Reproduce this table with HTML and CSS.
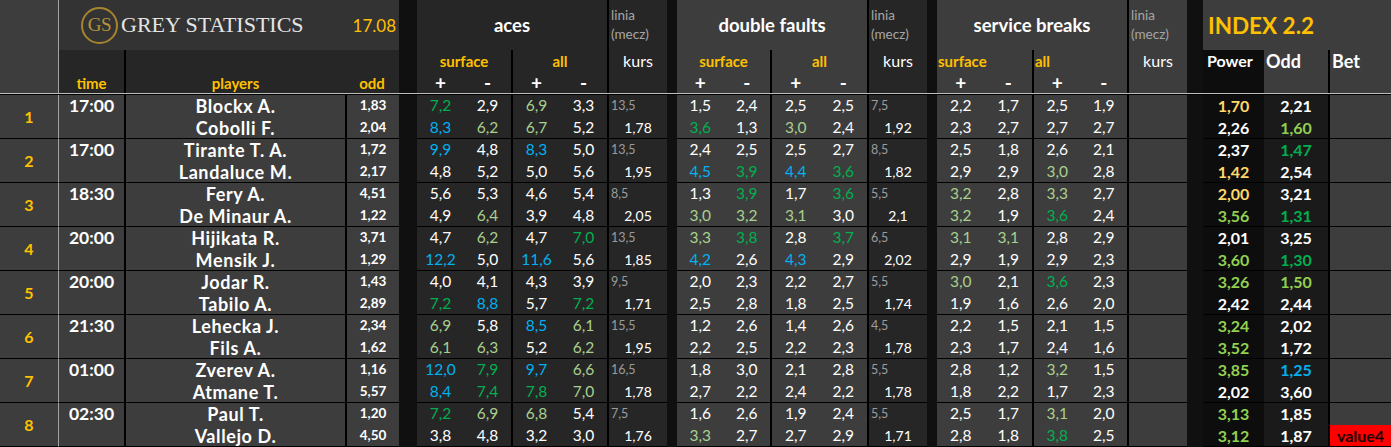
FILE: index.html
```html
<!DOCTYPE html>
<html lang="pl">
<head>
<meta charset="utf-8">
<title>Grey Statistics</title>
<link rel="stylesheet" href="styles.css">
</head>
<body>
<div class="sheet">
  <div class="hdr">
    <div class="m r2"></div>
    <div class="t sep c3 title">
      <span class="seal">GS</span>
      <span class="brand">GREY STATISTICS</span>
      <span class="date">17.08</span>
    </div>
    <div class="gap r2"></div>
    <div class="d c2 gt">aces</div>
    <div class="d bl r2 kh"><div class="lm">linia<br>(mecz)</div><div class="kw">kurs</div></div>
    <div class="gap r2"></div>
    <div class="m c2 gt">double faults</div>
    <div class="d bl r2 kh"><div class="lm">linia<br>(mecz)</div><div class="kw">kurs</div></div>
    <div class="gap r2"></div>
    <div class="m c2 gt">service breaks</div>
    <div class="m bl r2 kh"><div class="lm">linia<br>(mecz)</div><div class="kw">kurs</div></div>
    <div class="gap r2"></div>
    <div class="m c3 it">INDEX 2.2</div>

    <div class="d sep lab">time</div>
    <div class="d bl lab">players</div>
    <div class="d lab">odd</div>
    <div class="d hq"><span class="cap">surface</span><span class="pm">+</span><span class="pm">-</span></div>
    <div class="d bl hq"><span class="cap">all</span><span class="pm">+</span><span class="pm">-</span></div>
    <div class="m hq"><span class="cap">surface</span><span class="pm">+</span><span class="pm">-</span></div>
    <div class="m bl hq"><span class="cap">all</span><span class="pm">+</span><span class="pm">-</span></div>
    <div class="m hq"><span class="cap left">surface</span><span class="pm">+</span><span class="pm">-</span></div>
    <div class="m bl hq"><span class="cap left">all</span><span class="pm">+</span><span class="pm">-</span></div>
    <div class="k ih pwh">Power</div>
    <div class="m ih">Odd</div>
    <div class="m bl ih">Bet</div>
  </div>
  <div class="rule"></div>

  <div class="row">
    <div class="m idx">1</div>
    <div class="m sep tm">17:00</div>
    <div class="m bl two nm"><span>Blockx A.</span><span>Cobolli F.</span></div>
    <div class="m bl two od"><span>1,83</span><span>2,04</span></div>
    <div class="gap"></div>
    <div class="d q"><span class="g">7,2</span><span>2,9</span><span class="b">8,3</span><span class="l">6,2</span></div>
    <div class="d bl q"><span class="l">6,9</span><span>3,3</span><span class="l">6,7</span><span>5,2</span></div>
    <div class="d bl two kv"><span class="sm">13,5</span><span class="v">1,78</span></div>
    <div class="gap"></div>
    <div class="m q"><span>1,5</span><span>2,4</span><span class="g">3,6</span><span>1,3</span></div>
    <div class="m bl q"><span>2,5</span><span>2,5</span><span class="l">3,0</span><span>2,4</span></div>
    <div class="d bl two kv"><span class="sm">7,5</span><span class="v">1,92</span></div>
    <div class="gap"></div>
    <div class="m q"><span>2,2</span><span>1,7</span><span>2,3</span><span>2,7</span></div>
    <div class="m bl q"><span>2,5</span><span>1,9</span><span>2,7</span><span>2,7</span></div>
    <div class="m bl"></div>
    <div class="gap"></div>
    <div class="k two pw"><span class="y">1,70</span><span>2,26</span></div>
    <div class="o two pw"><span>2,21</span><span class="lg">1,60</span></div>
    <div class="m bl"></div>
  </div>

  <div class="row">
    <div class="m idx">2</div>
    <div class="m sep tm">17:00</div>
    <div class="m bl two nm"><span>Tirante T. A.</span><span>Landaluce M.</span></div>
    <div class="m bl two od"><span>1,72</span><span>2,17</span></div>
    <div class="gap"></div>
    <div class="d q"><span class="b">9,9</span><span>4,8</span><span>4,8</span><span>5,2</span></div>
    <div class="d bl q"><span class="b">8,3</span><span>5,0</span><span>5,0</span><span>5,6</span></div>
    <div class="d bl two kv"><span class="sm">13,5</span><span class="v">1,95</span></div>
    <div class="gap"></div>
    <div class="m q"><span>2,4</span><span>2,5</span><span class="b">4,5</span><span class="g">3,9</span></div>
    <div class="m bl q"><span>2,5</span><span>2,7</span><span class="b">4,4</span><span class="g">3,6</span></div>
    <div class="d bl two kv"><span class="sm">8,5</span><span class="v">1,82</span></div>
    <div class="gap"></div>
    <div class="m q"><span>2,5</span><span>1,8</span><span>2,9</span><span>2,9</span></div>
    <div class="m bl q"><span>2,6</span><span>2,1</span><span class="l">3,0</span><span>2,8</span></div>
    <div class="m bl"></div>
    <div class="gap"></div>
    <div class="k two pw"><span>2,37</span><span class="y">1,42</span></div>
    <div class="o two pw"><span class="g">1,47</span><span>2,54</span></div>
    <div class="m bl"></div>
  </div>

  <div class="row">
    <div class="m idx">3</div>
    <div class="m sep tm">18:30</div>
    <div class="m bl two nm"><span>Fery A.</span><span>De Minaur A.</span></div>
    <div class="m bl two od"><span>4,51</span><span>1,22</span></div>
    <div class="gap"></div>
    <div class="d q"><span>5,6</span><span>5,3</span><span>4,9</span><span class="l">6,4</span></div>
    <div class="d bl q"><span>4,6</span><span>5,4</span><span>3,9</span><span>4,8</span></div>
    <div class="d bl two kv"><span class="sm">8,5</span><span class="v">2,05</span></div>
    <div class="gap"></div>
    <div class="m q"><span>1,3</span><span class="g">3,9</span><span class="l">3,0</span><span class="l">3,2</span></div>
    <div class="m bl q"><span>1,7</span><span class="g">3,6</span><span class="l">3,1</span><span>3,0</span></div>
    <div class="d bl two kv"><span class="sm">5,5</span><span class="v">2,1</span></div>
    <div class="gap"></div>
    <div class="m q"><span class="l">3,2</span><span>2,8</span><span class="l">3,2</span><span>1,9</span></div>
    <div class="m bl q"><span class="l">3,3</span><span>2,7</span><span class="g">3,6</span><span>2,4</span></div>
    <div class="m bl"></div>
    <div class="gap"></div>
    <div class="k two pw"><span class="y">2,00</span><span class="lg">3,56</span></div>
    <div class="o two pw"><span>3,21</span><span class="g">1,31</span></div>
    <div class="m bl"></div>
  </div>

  <div class="row">
    <div class="m idx">4</div>
    <div class="m sep tm">20:00</div>
    <div class="m bl two nm"><span>Hijikata R.</span><span>Mensik J.</span></div>
    <div class="m bl two od"><span>3,71</span><span>1,29</span></div>
    <div class="gap"></div>
    <div class="d q"><span>4,7</span><span class="l">6,2</span><span class="b">12,2</span><span>5,0</span></div>
    <div class="d bl q"><span>4,7</span><span class="g">7,0</span><span class="b">11,6</span><span>5,6</span></div>
    <div class="d bl two kv"><span class="sm">13,5</span><span class="v">1,85</span></div>
    <div class="gap"></div>
    <div class="m q"><span class="l">3,3</span><span class="g">3,8</span><span class="b">4,2</span><span>2,6</span></div>
    <div class="m bl q"><span>2,8</span><span class="g">3,7</span><span class="b">4,3</span><span>2,9</span></div>
    <div class="d bl two kv"><span class="sm">6,5</span><span class="v">2,02</span></div>
    <div class="gap"></div>
    <div class="m q"><span class="l">3,1</span><span class="l">3,1</span><span>2,9</span><span>1,9</span></div>
    <div class="m bl q"><span>2,8</span><span>2,9</span><span>2,9</span><span>2,3</span></div>
    <div class="m bl"></div>
    <div class="gap"></div>
    <div class="k two pw"><span>2,01</span><span class="lg">3,60</span></div>
    <div class="o two pw"><span>3,25</span><span class="g">1,30</span></div>
    <div class="m bl"></div>
  </div>

  <div class="row">
    <div class="m idx">5</div>
    <div class="m sep tm">20:00</div>
    <div class="m bl two nm"><span>Jodar R.</span><span>Tabilo A.</span></div>
    <div class="m bl two od"><span>1,43</span><span>2,89</span></div>
    <div class="gap"></div>
    <div class="d q"><span>4,0</span><span>4,1</span><span class="g">7,2</span><span class="b">8,8</span></div>
    <div class="d bl q"><span>4,3</span><span>3,9</span><span>5,7</span><span class="g">7,2</span></div>
    <div class="d bl two kv"><span class="sm">9,5</span><span class="v">1,71</span></div>
    <div class="gap"></div>
    <div class="m q"><span>2,0</span><span>2,3</span><span>2,5</span><span>2,8</span></div>
    <div class="m bl q"><span>2,2</span><span>2,7</span><span>1,8</span><span>2,5</span></div>
    <div class="d bl two kv"><span class="sm">5,5</span><span class="v">1,74</span></div>
    <div class="gap"></div>
    <div class="m q"><span class="l">3,0</span><span>2,1</span><span>1,9</span><span>1,6</span></div>
    <div class="m bl q"><span class="g">3,6</span><span>2,3</span><span>2,6</span><span>2,0</span></div>
    <div class="m bl"></div>
    <div class="gap"></div>
    <div class="k two pw"><span class="lg">3,26</span><span>2,42</span></div>
    <div class="o two pw"><span class="lg">1,50</span><span>2,44</span></div>
    <div class="m bl"></div>
  </div>

  <div class="row">
    <div class="m idx">6</div>
    <div class="m sep tm">21:30</div>
    <div class="m bl two nm"><span>Lehecka J.</span><span>Fils A.</span></div>
    <div class="m bl two od"><span>2,34</span><span>1,62</span></div>
    <div class="gap"></div>
    <div class="d q"><span class="l">6,9</span><span>5,8</span><span class="l">6,1</span><span class="l">6,3</span></div>
    <div class="d bl q"><span class="b">8,5</span><span class="l">6,1</span><span>5,2</span><span class="l">6,2</span></div>
    <div class="d bl two kv"><span class="sm">15,5</span><span class="v">1,95</span></div>
    <div class="gap"></div>
    <div class="m q"><span>1,2</span><span>2,6</span><span>2,2</span><span>2,5</span></div>
    <div class="m bl q"><span>1,4</span><span>2,6</span><span>2,2</span><span>2,3</span></div>
    <div class="d bl two kv"><span class="sm">4,5</span><span class="v">1,78</span></div>
    <div class="gap"></div>
    <div class="m q"><span>2,2</span><span>1,5</span><span>2,3</span><span>1,7</span></div>
    <div class="m bl q"><span>2,1</span><span>1,5</span><span>2,4</span><span>1,6</span></div>
    <div class="m bl"></div>
    <div class="gap"></div>
    <div class="k two pw"><span class="lg">3,24</span><span class="lg">3,52</span></div>
    <div class="o two pw"><span>2,02</span><span>1,72</span></div>
    <div class="m bl"></div>
  </div>

  <div class="row">
    <div class="m idx">7</div>
    <div class="m sep tm">01:00</div>
    <div class="m bl two nm"><span>Zverev A.</span><span>Atmane T.</span></div>
    <div class="m bl two od"><span>1,16</span><span>5,57</span></div>
    <div class="gap"></div>
    <div class="d q"><span class="b">12,0</span><span class="g">7,9</span><span class="b">8,4</span><span class="g">7,4</span></div>
    <div class="d bl q"><span class="b">9,7</span><span class="l">6,6</span><span class="g">7,8</span><span class="l">7,0</span></div>
    <div class="d bl two kv"><span class="sm">16,5</span><span class="v">1,78</span></div>
    <div class="gap"></div>
    <div class="m q"><span>1,8</span><span>3,0</span><span>2,7</span><span>2,2</span></div>
    <div class="m bl q"><span>2,1</span><span>2,8</span><span>2,4</span><span>2,2</span></div>
    <div class="d bl two kv"><span class="sm">5,5</span><span class="v">1,78</span></div>
    <div class="gap"></div>
    <div class="m q"><span>2,8</span><span>1,2</span><span>1,8</span><span>2,2</span></div>
    <div class="m bl q"><span class="l">3,2</span><span>1,5</span><span>1,7</span><span>2,3</span></div>
    <div class="m bl"></div>
    <div class="gap"></div>
    <div class="k two pw"><span class="lg">3,85</span><span>2,02</span></div>
    <div class="o two pw"><span class="b">1,25</span><span>3,60</span></div>
    <div class="m bl"></div>
  </div>

  <div class="row">
    <div class="m idx">8</div>
    <div class="m sep tm">02:30</div>
    <div class="m bl two nm"><span>Paul T.</span><span>Vallejo D.</span></div>
    <div class="m bl two od"><span>1,20</span><span>4,50</span></div>
    <div class="gap"></div>
    <div class="d q"><span class="g">7,2</span><span class="l">6,9</span><span>3,8</span><span>4,8</span></div>
    <div class="d bl q"><span class="l">6,8</span><span>5,4</span><span>3,2</span><span>3,0</span></div>
    <div class="d bl two kv"><span class="sm">7,5</span><span class="v">1,76</span></div>
    <div class="gap"></div>
    <div class="m q"><span>1,6</span><span>2,6</span><span class="l">3,3</span><span>2,7</span></div>
    <div class="m bl q"><span>1,9</span><span>2,4</span><span>2,7</span><span>2,9</span></div>
    <div class="d bl two kv"><span class="sm">5,5</span><span class="v">1,71</span></div>
    <div class="gap"></div>
    <div class="m q"><span>2,5</span><span>1,7</span><span>2,8</span><span>1,8</span></div>
    <div class="m bl q"><span class="l">3,1</span><span>2,0</span><span class="g">3,8</span><span>2,5</span></div>
    <div class="m bl"></div>
    <div class="gap"></div>
    <div class="k two pw"><span class="lg">3,13</span><span class="lg">3,12</span></div>
    <div class="o two pw"><span>1,85</span><span>1,87</span></div>
    <div class="m bl two bet"><span></span><span class="val">value4</span></div>
  </div>
</div>
</body>
</html>
```

FILE: styles.css
```css
* { box-sizing: border-box; margin: 0; padding: 0; }
html, body { background: #000; }
body {
  width: 1391px;
  height: 447px;
  overflow: hidden;
  font-family: Lato, "Noto Sans", sans-serif;
  color: #fff;
}

.sheet { display: flex; flex-direction: column; }

.hdr, .row {
  display: grid;
  grid-template-columns: 58px 66px 221px 54px 18px 94px 96px 60px 10px 93px 97px 60px 10px 95px 95px 60px 16px 61px 64px 63px;
}
.hdr { grid-template-rows: 50px 43px; }
.rule { height: 2px; border-top: 1px solid #bdbdbd; background: #000; }
.row { grid-template-rows: 44px; }
.row > * { border-bottom: 1px solid #000; }
.row > .gap { border-bottom: 0; }

/* backgrounds */
.m { background: #3d3d3d; }
.d { background: #262626; }
.t { background: #333333; }
.k { background: #0d0d0d; }
.o { background: #1a1a1a; }
.gap { background: #101010; }

/* lines */
.bl { border-left: 2px solid #000; }
.sep { border-left: 1px solid #a3a3a3; }

/* spans */
.r2 { grid-row: span 2; }
.c2 { grid-column: span 2; }
.c3 { grid-column: span 3; }

/* title block */
.title { display: flex; align-items: center; padding-left: 22px; padding-right: 3px; }
.seal {
  width: 37px; height: 37px;
  border: 2px solid #a8842c;
  border-radius: 50%;
  display: flex; align-items: center; justify-content: center;
  font-family: "Liberation Serif", serif;
  font-size: 19px;
  color: #b8923a;
  letter-spacing: -0.5px;
}
.brand {
  margin-left: 3px;
  font-family: "Liberation Serif", serif;
  font-size: 22px;
  color: #e4e4e4;
}
.date { margin-left: auto; color: #ffc000; font-size: 17px; }

.gt { display: flex; align-items: center; justify-content: center; font-weight: 700; font-size: 18.5px; }
.it { display: flex; align-items: center; padding-left: 5px; color: #ffc000; font-weight: 700; font-size: 22.5px; }

/* linia / kurs header */
.kh { display: grid; grid-template-rows: 50px 22px 21px; }
.kh .lm { align-self: center; padding-left: 2px; font-size: 13.5px; line-height: 19px; color: #a6a6a6; }
.kh .kw { text-align: center; font-size: 16px; line-height: 22px; }

/* second header row */
.lab {
  display: flex; align-items: flex-end; justify-content: center;
  color: #ffc000; font-weight: 700; font-size: 15px; line-height: 20px;
}
.hq {
  display: grid;
  grid-template-columns: 1fr 1fr;
  grid-template-rows: 22px 21px;
  text-align: center;
  line-height: 22px;
}
.hq .cap { grid-column: span 2; color: #ffc000; font-weight: 700; font-size: 15px; }
.hq .cap.left { text-align: left; padding-left: 1px; }
.hq .pm { font-weight: 700; font-size: 19px; line-height: 21px; }
.ih { font-weight: 700; font-size: 18px; line-height: 22px; padding-left: 2px; }
.pwh { font-size: 16px; padding-left: 4px; }

/* data rows */
.idx {
  display: flex; align-items: center; justify-content: center;
  color: #ffc000; font-weight: 700; font-size: 16px;
}
.tm { font-weight: 700; font-size: 17.5px; line-height: 22px; text-align: center; }
.two {
  display: grid;
  grid-template-rows: 22px 21px;
  align-items: center;
  text-align: center;
}
.two > span, .q > span { line-height: 1; }
.nm { font-weight: 700; font-size: 18px; letter-spacing: 0.6px; }
.od { font-weight: 700; font-size: 13.5px; }
.q {
  display: grid;
  grid-template-columns: 1fr 1fr;
  grid-template-rows: 22px 21px;
  align-items: center;
  text-align: center;
  font-size: 15.5px;
}
.kv .sm { text-align: left; padding-left: 2px; font-size: 12.5px; color: #9c9c9c; }
.kv .v { font-size: 14px; }
.pw { font-weight: 700; font-size: 16px; }
.bet { align-items: stretch; }
.bet .val {
  background: #ff0000;
  color: #1a0000;
  font-weight: 700;
  font-size: 16px;
  line-height: 21px;
}

/* value colours */
.g { color: #00b050; }
.l { color: #a9d08e; }
.b { color: #00b0f0; }
.y { color: #ffd966; }
.lg { color: #92d050; }
```
